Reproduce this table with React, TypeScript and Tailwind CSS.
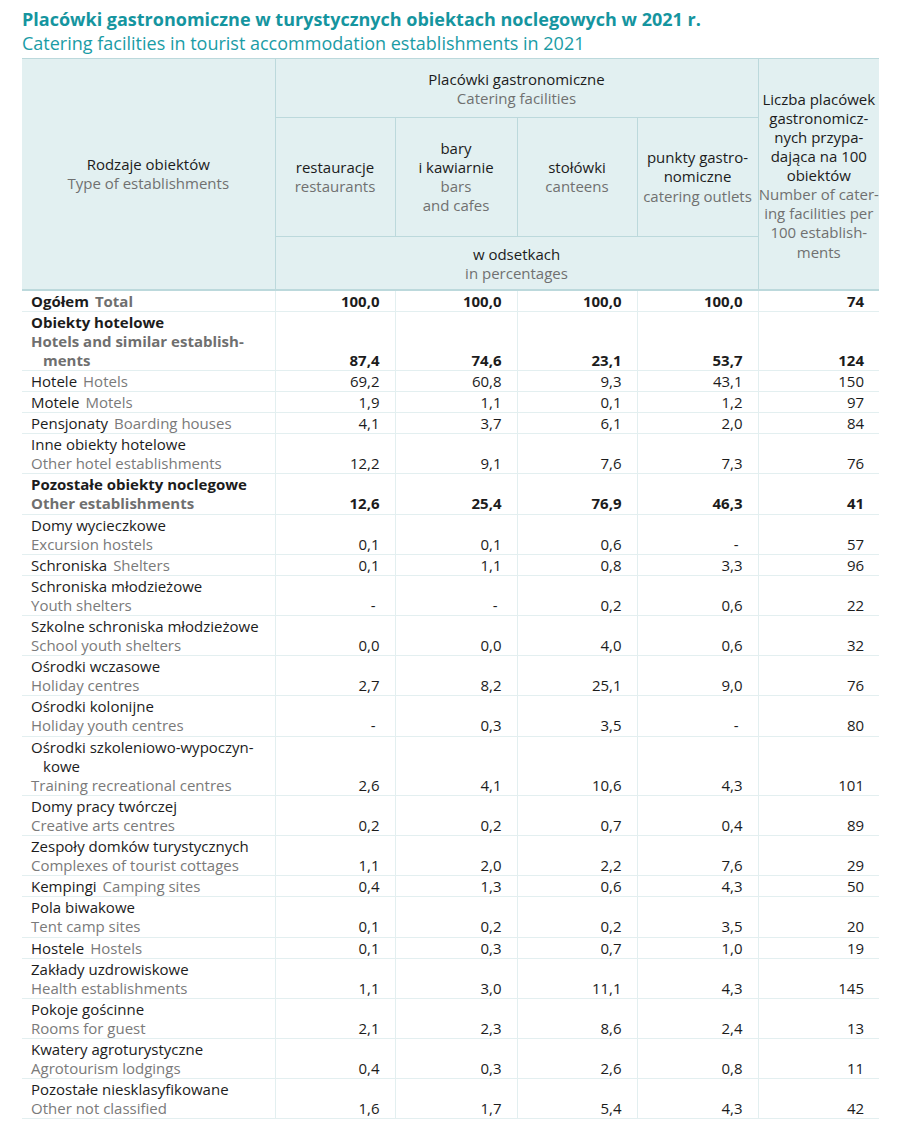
import React from 'react'

type Row = {
  pl: string[]
  en: string[]
  inline?: boolean
  bold?: boolean
  v: string[]
}

const rows: Row[] = [
  { pl: ['Ogółem'], en: ['Total'], inline: true, bold: true, v: ['100,0', '100,0', '100,0', '100,0', '74'] },
  { pl: ['Obiekty hotelowe'], en: ['Hotels and similar establish-', 'ments'], bold: true, v: ['87,4', '74,6', '23,1', '53,7', '124'] },
  { pl: ['Hotele'], en: ['Hotels'], inline: true, v: ['69,2', '60,8', '9,3', '43,1', '150'] },
  { pl: ['Motele'], en: ['Motels'], inline: true, v: ['1,9', '1,1', '0,1', '1,2', '97'] },
  { pl: ['Pensjonaty'], en: ['Boarding houses'], inline: true, v: ['4,1', '3,7', '6,1', '2,0', '84'] },
  { pl: ['Inne obiekty hotelowe'], en: ['Other hotel establishments'], v: ['12,2', '9,1', '7,6', '7,3', '76'] },
  { pl: ['Pozostałe obiekty noclegowe'], en: ['Other establishments'], bold: true, v: ['12,6', '25,4', '76,9', '46,3', '41'] },
  { pl: ['Domy wycieczkowe'], en: ['Excursion hostels'], v: ['0,1', '0,1', '0,6', '-', '57'] },
  { pl: ['Schroniska'], en: ['Shelters'], inline: true, v: ['0,1', '1,1', '0,8', '3,3', '96'] },
  { pl: ['Schroniska młodzieżowe'], en: ['Youth shelters'], v: ['-', '-', '0,2', '0,6', '22'] },
  { pl: ['Szkolne schroniska młodzieżowe'], en: ['School youth shelters'], v: ['0,0', '0,0', '4,0', '0,6', '32'] },
  { pl: ['Ośrodki wczasowe'], en: ['Holiday centres'], v: ['2,7', '8,2', '25,1', '9,0', '76'] },
  { pl: ['Ośrodki kolonijne'], en: ['Holiday youth centres'], v: ['-', '0,3', '3,5', '-', '80'] },
  { pl: ['Ośrodki szkoleniowo-wypoczyn-', 'kowe'], en: ['Training recreational centres'], v: ['2,6', '4,1', '10,6', '4,3', '101'] },
  { pl: ['Domy pracy twórczej'], en: ['Creative arts centres'], v: ['0,2', '0,2', '0,7', '0,4', '89'] },
  { pl: ['Zespoły domków turystycznych'], en: ['Complexes of tourist cottages'], v: ['1,1', '2,0', '2,2', '7,6', '29'] },
  { pl: ['Kempingi'], en: ['Camping sites'], inline: true, v: ['0,4', '1,3', '0,6', '4,3', '50'] },
  { pl: ['Pola biwakowe'], en: ['Tent camp sites'], v: ['0,1', '0,2', '0,2', '3,5', '20'] },
  { pl: ['Hostele'], en: ['Hostels'], inline: true, v: ['0,1', '0,3', '0,7', '1,0', '19'] },
  { pl: ['Zakłady uzdrowiskowe'], en: ['Health establishments'], v: ['1,1', '3,0', '11,1', '4,3', '145'] },
  { pl: ['Pokoje gościnne'], en: ['Rooms for guest'], v: ['2,1', '2,3', '8,6', '2,4', '13'] },
  { pl: ['Kwatery agroturystyczne'], en: ['Agrotourism lodgings'], v: ['0,4', '0,3', '2,6', '0,8', '11'] },
  { pl: ['Pozostałe niesklasyfikowane'], en: ['Other not classified'], v: ['1,6', '1,7', '5,4', '4,3', '42'] },
]

const facilities = [
  { pl: ['restauracje'], en: ['restaurants'] },
  { pl: ['bary', 'i kawiarnie'], en: ['bars', 'and cafes'] },
  { pl: ['stołówki'], en: ['canteens'] },
  { pl: ['punkty gastro-', 'nomiczne'], en: ['catering outlets'] },
]

function Lines({ items, className, indentRest }: { items: string[]; className?: string; indentRest?: boolean }) {
  return (
    <>
      {items.map((t, i) => (
        <div key={i} className={`whitespace-nowrap ${className ?? ''} ${indentRest && i > 0 ? 'pl-3' : ''}`}>{t}</div>
      ))}
    </>
  )
}

export default function App() {
  return (
    <div className="w-[901px] min-h-[1147px] bg-white px-[22px] pt-[8px] text-[#1c1c1c]" style={{ fontFamily: '"Open Sans", "Noto Sans", sans-serif' }}>
      {/* Tytuł */}
      <h1 className="text-[18px] font-bold leading-[23px] text-[#15959f] whitespace-nowrap">
        Placówki gastronomiczne w turystycznych obiektach noclegowych w 2021 r.
      </h1>
      <p className="text-[18px] leading-[24px] text-[#1a9ca6] whitespace-nowrap">
        Catering facilities in tourist accommodation establishments in 2021
      </p>

      <table className="mt-[3px] w-[857px] table-fixed border-collapse text-[15px] leading-[19.1px]">
        <colgroup>
          <col className="w-[253px]" />
          <col className="w-[120px]" />
          <col className="w-[122px]" />
          <col className="w-[120px]" />
          <col className="w-[121px]" />
          <col className="w-[121px]" />
        </colgroup>
        <thead className="bg-[#e2f0f1]">
          <tr className="h-[59px] border-t border-[#bcd9dc]">
            <th rowSpan={3} className="border-r border-b-2 border-[#bcd9dc] text-center align-middle font-normal">
              <div>Rodzaje obiektów</div>
              <div className="text-[#707070]">Type of establishments</div>
            </th>
            <th colSpan={4} className="border-r border-b border-[#bcd9dc] pt-[2px] text-center align-middle font-normal">
              <div>Placówki gastronomiczne</div>
              <div className="text-[#707070]">Catering facilities</div>
            </th>
            <th rowSpan={3} className="border-b-2 border-[#bcd9dc] pt-[4px] text-center align-middle font-normal">
              <Lines items={['Liczba placówek', 'gastronomicz-', 'nych przypa-', 'dająca na 100', 'obiektów']} />
              <Lines items={['Number of cater-', 'ing facilities per', '100 establish-', 'ments']} className="text-[#707070]" />
            </th>
          </tr>
          <tr className="h-[119px]">
            {facilities.map((f, i) => (
              <th key={i} className="border-r border-b border-[#bcd9dc] text-center align-middle font-normal">
                <Lines items={f.pl} />
                <Lines items={f.en} className="text-[#707070]" />
              </th>
            ))}
          </tr>
          <tr className="h-[53px]">
            <th colSpan={4} className="border-r border-b-2 border-[#bcd9dc] pt-[3px] text-center align-middle font-normal">
              <div>w odsetkach</div>
              <div className="text-[#707070]">in percentages</div>
            </th>
          </tr>
        </thead>
        <tbody>
          {rows.map((r, i) => (
            <tr key={i} className={`border-b border-[#e3eff0] ${r.bold ? 'font-bold' : ''}`}>
              <td className="pl-[9px] pt-px align-bottom border-r border-[#e3eff0]">
                {r.inline ? (
                  <div className="whitespace-nowrap">
                    {r.pl[0]}
                    <span className={`ml-[6px] ${r.bold ? 'text-[#6f6f6f]' : 'text-[#7a7a7a]'}`}>{r.en[0]}</span>
                  </div>
                ) : (
                  <>
                    <Lines items={r.pl} indentRest />
                    <Lines items={r.en} indentRest className={r.bold ? 'text-[#6f6f6f]' : 'text-[#7a7a7a]'} />
                  </>
                )}
              </td>
              {r.v.map((v, j) => (
                <td key={j} className={`pr-[15px] pt-px text-right align-bottom ${j < 4 ? 'border-r border-[#e3eff0]' : ''}`}>
                  {v === '-' ? <span className="mr-[4px]">-</span> : v}
                </td>
              ))}
            </tr>
          ))}
        </tbody>
      </table>
    </div>
  )
}
